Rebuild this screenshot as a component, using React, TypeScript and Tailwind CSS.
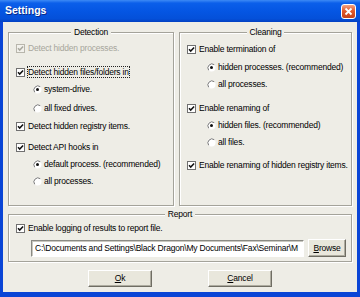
import React from "react";

const font = "font-['Tahoma','Liberation_Sans',Arial,sans-serif]";

function CheckBox({ disabled }: { disabled?: boolean }) {
  return (
    <svg width="9" height="9" viewBox="0 0 9 9" className="shrink-0">
      <rect x="0.5" y="0.5" width="8" height="8" fill={disabled ? "#f2f1ec" : "#fff"} stroke={disabled ? "#b8b6ac" : "#707070"} />
      <path d="M2 4.3 L3.7 6.1 L7.1 2.4" fill="none" stroke={disabled ? "#a9a89e" : "#111"} strokeWidth="1.5" />
    </svg>
  );
}

function Radio({ on }: { on?: boolean }) {
  return (
    <svg width="9" height="9" viewBox="0 0 9 9" className="shrink-0">
      <circle cx="4.5" cy="4.5" r="4" fill="#fff" />
      <path d="M7.3 1.7 A4 4 0 0 0 1.7 7.3" fill="none" stroke="#777" strokeWidth="1" />
      {on && <circle cx="4.5" cy="4.5" r="1.5" fill="#111" />}
    </svg>
  );
}

function CheckRow({ label, disabled, focus, className = "" }: { label: string; disabled?: boolean; focus?: boolean; className?: string }) {
  return (
    <div className={`flex h-[16px] items-center gap-[2px] pl-[7px] ${className}`}>
      <CheckBox disabled={disabled} />
      <span
        className={`border leading-[10px] whitespace-nowrap ${focus ? "border-dotted border-[#222]" : "border-transparent"} ${disabled ? "text-[#a7a69c]" : ""}`}
      >
        {label}
      </span>
    </div>
  );
}

function RadioRow({ label, on, className = "" }: { label: string; on?: boolean; className?: string }) {
  return (
    <div className={`flex h-[16px] items-center gap-[1px] ${className}`}>
      <Radio on={on} />
      <span className="border border-transparent leading-[10px] whitespace-nowrap">{label}</span>
    </div>
  );
}

function GroupLabel({ text }: { text: string }) {
  return <div className="mx-auto -mt-[6px] bg-[#eeede6] px-[3px] leading-[10px]">{text}</div>;
}

const box = "flex flex-col border border-[#a4a39a] shadow-[inset_1px_1px_0_#fff,1px_1px_0_#fff]";
const btn =
  "flex items-center justify-center border border-t-white border-l-white border-r-[#6f6d63] border-b-[#6f6d63] bg-[#e9e7dc] shadow-[inset_-1px_-1px_0_#aeaca0]";

export default function App() {
  return (
    <div className={`flex h-[297px] w-[360px] flex-col text-[8.5px] tracking-[-0.2px] text-black ${font}`}>
      {/* title bar */}
      <div className="flex h-[22px] items-center justify-between bg-[linear-gradient(180deg,#3d8af5_0%,#0b5fea_14%,#0556e3_50%,#0450d9_85%,#0341c2_100%)] pl-[5px] pr-[4px]">
        <span className="text-[10.5px] font-bold tracking-normal text-white [text-shadow:1px_1px_0_#0a2a8a]">Settings</span>
        <div className="flex h-[15px] w-[15px] items-center justify-center rounded-[3px] border border-white bg-[linear-gradient(180deg,#f3a283,#e35a2c_45%,#c6421a)]">
          <svg width="9" height="9" viewBox="0 0 9 9">
            <path d="M1.5 1.5 L7.5 7.5 M7.5 1.5 L1.5 7.5" stroke="#fff" strokeWidth="1.8" />
          </svg>
        </div>
      </div>

      {/* body */}
      <div className="flex flex-1 flex-col border-x-[3px] border-b-[5px] border-x-[#0a45d6] border-b-[#0a45d6] bg-[#eeede6] px-[5px] pt-[10px]">
        <div className="flex h-[174px] gap-[5px]">
          <div className={`w-[166px] ${box}`}>
            <GroupLabel text="Detection" />
            <CheckRow label="Detect hidden processes." disabled className="mt-[3px]" />
            <CheckRow label="Detect hidden files/folders in" focus className="mt-[8px]" />
            <RadioRow label="system-drive." on className="mt-[1px] pl-[24px]" />
            <RadioRow label="all fixed drives." className="mt-[3px] pl-[24px]" />
            <CheckRow label="Detect hidden registry items." className="mt-[2px]" />
            <CheckRow label="Detect API hooks in" className="mt-[5px]" />
            <RadioRow label="default process. (recommended)" on className="mt-[1px] pl-[24px]" />
            <RadioRow label="all processes." className="mt-[1px] pl-[24px]" />
          </div>
          <div className={`flex-1 ${box}`}>
            <GroupLabel text="Cleaning" />
            <CheckRow label="Enable termination of" className="mt-[4px]" />
            <RadioRow label="hidden processes. (recommended)" on className="mt-[2px] pl-[27px]" />
            <RadioRow label="all processes." className="mt-[1px] pl-[27px]" />
            <CheckRow label="Enable renaming of" className="mt-[8px]" />
            <RadioRow label="hidden files. (recommended)" on className="mt-[1px] pl-[27px]" />
            <RadioRow label="all files." className="mt-[1px] pl-[27px]" />
            <CheckRow label="Enable renaming of hidden registry items." className="mt-[7px]" />
          </div>
        </div>

        <div className={`mt-[8px] h-[48px] ${box}`}>
          <GroupLabel text="Report" />
          <CheckRow label="Enable logging of results to report file." className="mt-[1px]" />
          <div className="mt-[3px] flex items-center gap-[4px] pl-[22px] pr-[5px]">
            <div className="flex h-[17px] w-[273px] items-center overflow-hidden whitespace-nowrap border border-t-[#8a8a84] border-l-[#8a8a84] border-b-white border-r-white bg-white pl-[3px] shadow-[inset_1px_1px_0_#c9c8c0]">
              C:\Documents and Settings\Black Dragon\My Documents\Fax\Seminar\M
            </div>
            <div className={`h-[18px] w-[38px] ${btn}`}>
              <span className="whitespace-nowrap">
                <u>B</u>rowse
              </span>
            </div>
          </div>
        </div>

        <div className="mt-[8px] flex justify-center gap-[56px]">
          <div className={`h-[17px] w-[64px] ${btn}`}>
            <span>
              <u>O</u>k
            </span>
          </div>
          <div className={`h-[17px] w-[64px] ${btn}`}>
            <span>
              <u>C</u>ancel
            </span>
          </div>
        </div>
      </div>
    </div>
  );
}
